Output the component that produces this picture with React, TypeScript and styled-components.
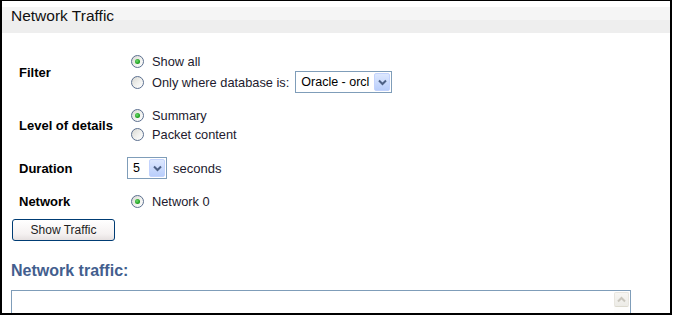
import React from 'react';
import styled, { createGlobalStyle } from 'styled-components';

const GlobalStyle = createGlobalStyle`
	html, body {
		margin: 0;
		padding: 0;
		background: #fff;
	}
	body {
		font-family: "Liberation Sans", Arial, sans-serif;
		color: #000;
	}
`;

const Frame = styled.div`
	width: 672px;
	height: 315px;
	box-sizing: border-box;
	border-top: 1px solid #000;
	border-left: 2px solid #000;
	border-right: 2px solid #000;
	border-bottom: 2px solid #000;
	overflow: hidden;
	background: #fff;
`;

const Header = styled.div`
	margin-top: 6px;
	height: 26px;
	padding-left: 9px;
	background: linear-gradient(#f5f5f5 0, #f5f5f5 13px, #eeeeee 13px, #eeeeee 100%);
	font-size: 15.5px;
	line-height: 17px;
	color: #111;
`;

const Form = styled.div`
	display: grid;
	grid-template-columns: 108px 1fr;
	row-gap: 13px;
	align-items: center;
	margin-top: 19px;
	padding-left: 17px;
`;

const Label = styled.div`
	font-size: 13px;
	font-weight: bold;
	color: #000;
`;

const Options = styled.div`
	display: flex;
	flex-direction: column;
`;

const Option = styled.div<{ $tall?: boolean }>`
	display: flex;
	align-items: center;
	height: ${(props) => (props.$tall ? '22px' : '19px')};
	font-size: 12.8px;
	color: #221a2e;
`;

const Radio = styled.span<{ $checked?: boolean }>`
	position: relative;
	box-sizing: border-box;
	width: 13px;
	height: 13px;
	margin: 0 8px 0 4px;
	border-radius: 50%;
	border: 1px solid #5b6f8f;
	background: linear-gradient(135deg, #d8d8d2 0%, #f1f1ee 55%, #ffffff 100%);
	flex-shrink: 0;

	&::after {
		content: '';
		display: ${(props) => (props.$checked ? 'block' : 'none')};
		position: absolute;
		left: 3px;
		top: 3px;
		width: 5px;
		height: 5px;
		border-radius: 50%;
		background: radial-gradient(circle at 40% 40%, #6fdc6f 0%, #21a121 60%, #1b8a1b 100%);
	}
`;

const Select = styled.div<{ $width: number; $gap?: number }>`
	display: flex;
	align-items: center;
	justify-content: space-between;
	box-sizing: border-box;
	width: ${(props) => props.$width}px;
	height: 22px;
	margin-left: ${(props) => props.$gap ?? 0}px;
	padding: 1px;
	border: 1px solid #7f9db9;
	background: #fff;
	font-size: 12.5px;
	color: #000;
`;

const SelectValue = styled.span`
	padding-left: 4px;
	white-space: nowrap;
`;

const SelectButton = styled.span`
	display: flex;
	align-items: center;
	justify-content: center;
	box-sizing: border-box;
	width: 16px;
	height: 18px;
	border: 1px solid #c3d3fd;
	border-radius: 2px;
	background: linear-gradient(#dde8fe, #b9cefb);
	flex-shrink: 0;
`;

const Unit = styled.span`
	margin-left: 6px;
	font-size: 13px;
	color: #221a2e;
`;

const DurationRow = styled.div`
	display: flex;
	align-items: center;
`;

const Button = styled.button`
	display: block;
	box-sizing: border-box;
	width: 103px;
	height: 22px;
	margin: 8px 0 0 10px;
	padding: 0;
	border: 1px solid #003c74;
	border-radius: 3px;
	background: linear-gradient(#ffffff 0%, #f5f1f1 70%, #e6e0e0 100%);
	font-family: "Liberation Sans", Arial, sans-serif;
	font-size: 12px;
	color: #222;
`;

const SectionTitle = styled.div`
	margin-top: 21px;
	padding-left: 9px;
	font-size: 16px;
	font-weight: bold;
	line-height: 18px;
	color: #435e8e;
`;

const TrafficBox = styled.div`
	display: flex;
	justify-content: flex-end;
	box-sizing: border-box;
	width: 620px;
	height: 60px;
	margin: 10px 0 0 9px;
	border: 1px solid #7f9db9;
	background: #fff;
`;

const ScrollBar = styled.div`
	width: 15px;
	margin: 1px 1px 0 0;
	background: #fdfdfc;
`;

const ScrollButton = styled.div`
	display: flex;
	align-items: center;
	justify-content: center;
	box-sizing: border-box;
	height: 15px;
	border: 1px solid #e8e6df;
	border-radius: 2px;
	background: linear-gradient(#f7f6f3, #ecebe6);
	border-bottom-color: #dcdacf;
`;

const Chevron = ({ color, up }: { color: string; up?: boolean }) => (
	<svg width="9" height="7" viewBox="0 0 9 7">
		<path
			d={up ? 'M1 5.5 L4.5 2 L8 5.5' : 'M1 1.5 L4.5 5 L8 1.5'}
			fill="none"
			stroke={color}
			strokeWidth="2"
		/>
	</svg>
);

const App = () => {
	return (
		<>
			<GlobalStyle />
			<Frame>
				<Header>Network Traffic</Header>
				<Form>
					<Label>Filter</Label>
					<Options>
						<Option>
							<Radio $checked />
							Show all
						</Option>
						<Option $tall>
							<Radio />
							Only where database is:
							<Select $width={97} $gap={6}>
								<SelectValue>Oracle - orcl</SelectValue>
								<SelectButton>
									<Chevron color="#4d6185" />
								</SelectButton>
							</Select>
						</Option>
					</Options>

					<Label>Level of details</Label>
					<Options>
						<Option>
							<Radio $checked />
							Summary
						</Option>
						<Option>
							<Radio />
							Packet content
						</Option>
					</Options>

					<Label>Duration</Label>
					<DurationRow>
						<Select $width={40}>
							<SelectValue>5</SelectValue>
							<SelectButton>
								<Chevron color="#4d6185" />
							</SelectButton>
						</Select>
						<Unit>seconds</Unit>
					</DurationRow>

					<Label>Network</Label>
					<Options>
						<Option>
							<Radio $checked />
							Network 0
						</Option>
					</Options>
				</Form>
				<Button>Show Traffic</Button>
				<SectionTitle>Network traffic:</SectionTitle>
				<TrafficBox>
					<ScrollBar>
						<ScrollButton>
							<Chevron color="#c9c6bd" up />
						</ScrollButton>
					</ScrollBar>
				</TrafficBox>
			</Frame>
		</>
	);
};

export default App;
